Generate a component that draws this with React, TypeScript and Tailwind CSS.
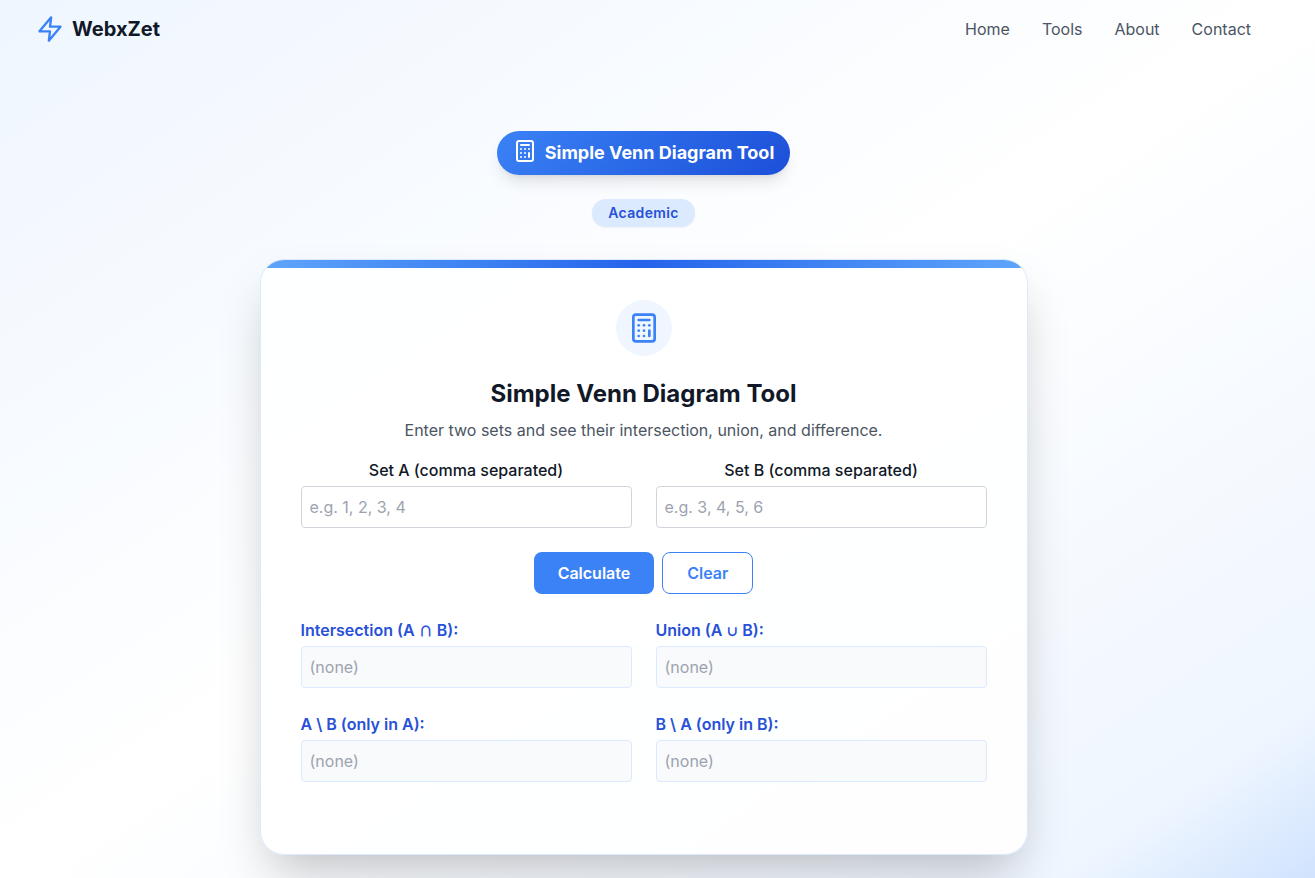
import { type ReactNode, useId, useState } from "react";
import { Calculator } from "lucide-react";
import { FiZap } from "react-icons/fi";

const links = ["Home", "Tools", "About", "Contact"];

const parse = (value: string) =>
  Array.from(new Set(value.split(",").map((s) => s.trim()).filter(Boolean)));

function SetInput({ label, placeholder, value, onChange }: {
  label: string;
  placeholder: string;
  value: string;
  onChange: (value: string) => void;
}) {
  const id = useId();
  return (
    <div className="flex flex-col gap-1">
      <label htmlFor={id} className="text-center font-medium">{label}</label>
      <input
        id={id}
        type="text"
        placeholder={placeholder}
        value={value}
        onChange={(e) => onChange(e.target.value)}
        className="w-full rounded border border-[#d1d5db] bg-white p-2 placeholder:text-[#9ca3af]"
      />
    </div>
  );
}

function Result({ label, items }: { label: ReactNode; items: string[] }) {
  return (
    <div className="flex flex-col gap-1">
      <h3 className="font-semibold text-[#2850d8]">{label}</h3>
      <output className="block rounded border border-[#dbeafe] bg-[#f9fafb] p-2">
        {items.length ? items.join(", ") : <span className="text-[#9ca3af]">(none)</span>}
      </output>
    </div>
  );
}

export default function App() {
  const [a, setA] = useState("");
  const [b, setB] = useState("");
  const [sets, setSets] = useState<{ a: string[]; b: string[] }>({ a: [], b: [] });

  const clear = () => {
    setA("");
    setB("");
    setSets({ a: [], b: [] });
  };

  return (
    <div className="min-h-screen bg-[linear-gradient(to_bottom_right,#eff6ff_0%,#ffffff_50%,#eff6ff_90%,#d0e3fe_100%)] pr-7 font-['Inter',sans-serif] text-[#111827]">
      <header className="flex items-center justify-between px-9 py-[15px]">
        <a href="#home" className="flex items-center gap-2 text-xl font-bold">
          <FiZap className="size-7 text-[#3b82f6]" />
          WebxZet
        </a>
        <nav className="flex gap-8 text-[#4b5563]">
          {links.map((link) => (
            <a key={link} href={`#${link.toLowerCase()}`}>{link}</a>
          ))}
        </nav>
      </header>

      <main className="flex flex-col items-center px-4 pt-[73px] pb-6">
        <h1 className="flex items-start gap-2 rounded-full bg-linear-135 from-[#3b82f6] to-[#1d4ed8] px-4 py-2 text-lg font-bold text-white shadow-lg">
          <Calculator className="size-6" />
          Simple Venn Diagram Tool
        </h1>
        <span className="mt-6 rounded-full bg-[#dbeafe] px-4 py-1 text-sm font-semibold tracking-wide text-[#2850d8] shadow-xs">
          Academic
        </span>

        <section className="relative mt-8 w-full max-w-3xl overflow-hidden rounded-3xl border border-[#dbeafe] bg-white/90 px-10 pt-10 pb-[72px] shadow-2xl">
          <div className="absolute inset-x-0 top-0 h-2 bg-linear-to-r from-[#60a5fa] via-[#2563eb] to-[#60a5fa]" />
          <div className="mb-[22px] flex justify-center">
            <div className="rounded-full bg-[#eff6ff] p-3">
              <Calculator className="size-8 text-[#3b82f6]" />
            </div>
          </div>
          <h2 className="mb-2 text-center text-2xl font-bold">Simple Venn Diagram Tool</h2>
          <p className="mb-4 text-center text-[#4b5563]">
            Enter two sets and see their intersection, union, and difference.
          </p>
          <form
            onSubmit={(e) => {
              e.preventDefault();
              setSets({ a: parse(a), b: parse(b) });
            }}
          >
            <div className="grid grid-cols-2 gap-6">
              <SetInput label="Set A (comma separated)" placeholder="e.g. 1, 2, 3, 4" value={a} onChange={setA} />
              <SetInput label="Set B (comma separated)" placeholder="e.g. 3, 4, 5, 6" value={b} onChange={setB} />
            </div>
            <div className="my-6 flex justify-center gap-2">
              <button type="submit" className="rounded-lg bg-[#3b82f6] px-6 py-2 font-semibold text-white">
                Calculate
              </button>
              <button type="button" onClick={clear} className="rounded-lg border border-[#3b82f6] bg-white px-6 py-2 font-semibold text-[#3b82f6]">
                Clear
              </button>
            </div>
          </form>
          <div className="grid grid-cols-2 gap-6">
            <Result
              label={<>Intersection (A <span className="font-['Noto_Sans_CJK_JP',sans-serif] text-sm leading-none">∩</span> B):</>}
              items={sets.a.filter((x) => sets.b.includes(x))}
            />
            <Result
              label={<>Union (A <span className="font-['DejaVu_Serif',serif] text-sm leading-none">∪</span> B):</>}
              items={Array.from(new Set([...sets.a, ...sets.b]))}
            />
            <Result label="A \ B (only in A):" items={sets.a.filter((x) => !sets.b.includes(x))} />
            <Result label="B \ A (only in B):" items={sets.b.filter((x) => !sets.a.includes(x))} />
          </div>
        </section>
      </main>
    </div>
  );
}
